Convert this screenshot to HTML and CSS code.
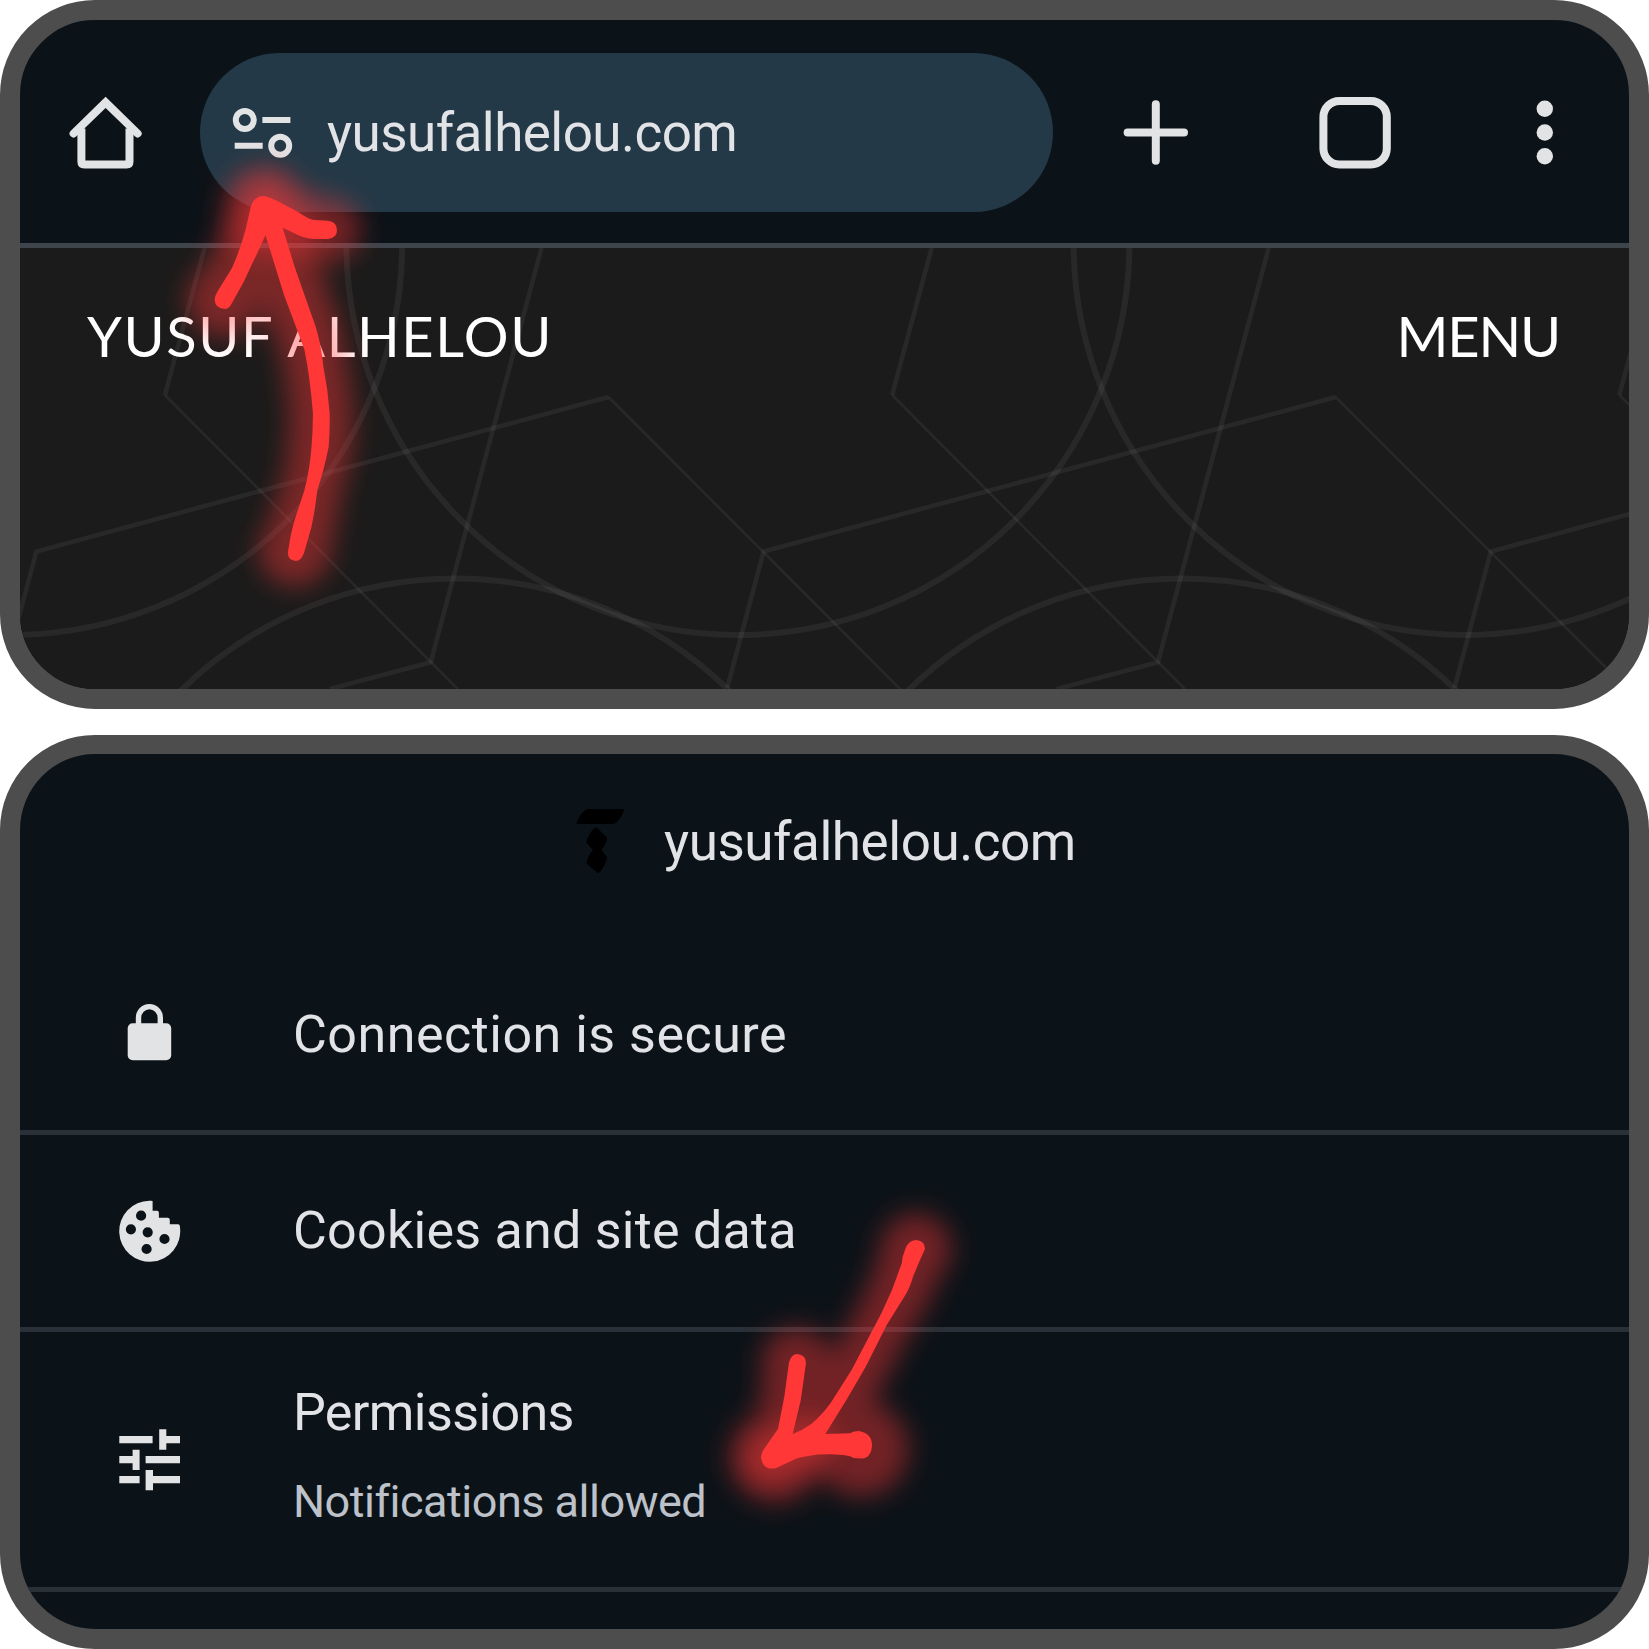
FILE: index.html
```html
<!DOCTYPE html>
<html lang="en">
<head>
<meta charset="utf-8">
<title>yusufalhelou.com</title>
<link rel="stylesheet" href="styles.css">
</head>
<body>
<main class="page">
  <section class="panel panel-browser">
    <header class="toolbar">
      <svg class="icon home" viewBox="68 94.500 76 76">
        <path d="M73.6 133 105.6 101.9 137.6 133" stroke-linecap="round"/>
        <path d="M81.4 128V161Q81.4 164 84.4 164H126.6Q129.5 164 129.5 161V128"/>
      </svg>
      <div class="omnibox">
        <svg class="icon site-info" viewBox="232 107.500 62 50">
          <circle cx="244.8" cy="119.6" r="9"/><circle cx="280.2" cy="145.3" r="9"/>
          <path d="M262.4 119.5H290.4M234.7 145.3H262.7"/>
        </svg>
        <span class="url">yusufalhelou.com</span>
      </div>
      <svg class="icon plus" viewBox="1122 99 68 68"><path d="M1127.6 132.5H1184M1155.8 104.3V160.7"/></svg>
      <svg class="icon tabs" viewBox="1319 96.500 72 72"><rect x="1323.4" y="100.5" width="63.4" height="63.4" rx="16"/></svg>
      <svg class="icon dots" viewBox="1535 99 20 68"><circle cx="1544.8" cy="108.7" r="8.2"/><circle cx="1544.8" cy="132.5" r="8.2"/><circle cx="1544.8" cy="156.2" r="8.2"/></svg>
    </header>
    <div class="site">
      <svg class="pattern" viewBox="20 248 1609 441">
        <defs>
          <g id="tile">
            <path class="mid" d="M204.5 248 164.9 395"/>
            <path class="thin" d="M164.9 395 457.7 689"/>
            <path class="mid" d="M541.5 248 430.7 662.3 329.7 689"/>
            <path class="mid" d="M0 688 36.4 551.5 608.6 397"/>
            <path class="thin" d="M608.6 397 901 690"/>
            <circle class="thick" cx="10.7" cy="243.5" r="391.5"/>
            <circle class="thick" cx="455" cy="970" r="391.5"/>
          </g>
        </defs>
        <use href="#tile"/><use href="#tile" x="727.2"/><use href="#tile" x="1454.4"/>
      </svg>
      <nav class="site-nav"><span class="brand">YUSUF ALHELOU</span><span class="menu">MENU</span></nav>
    </div>
  </section>

  <section class="panel panel-info">
    <header class="site-head">
      <svg class="favicon" viewBox="575 807 51 67">
        <path d="M576.3 824Q580 812 587.5 809H624.4Q621 820 614 824ZM596.3 827.3 607.3 837.7Q606 845 601.5 850L607.3 857.3Q605 866 600 872L597.5 873 586.3 863.3Q588 855 593 850L586.3 842.7Q588 834 594 828.5Z"/>
      </svg>
      <span class="host">yusufalhelou.com</span>
    </header>
    <div class="row row-secure">
      <svg class="row-icon" viewBox="119 1000 62 64">
        <rect x="127.7" y="1023.3" width="43.5" height="37" rx="5"/>
        <path class="shackle" d="M138.5 1026V1018A10.9 11.4 0 0 1 160.3 1018V1026"/>
      </svg>
      <span class="label secure">Connection is secure</span>
    </div>
    <div class="row row-cookies">
      <svg class="row-icon" viewBox="119 1199 62 64">
        <path fill-rule="evenodd" d="M152.6 1201V1210.7H157Q158.9 1210.7 158.9 1213V1217.7H167.5Q169.8 1217.7 169.8 1220V1224.3H178Q180 1224.3 180 1227.5A30.5 30.5 0 1 1 149.4 1200.7Q152.6 1200.5 152.6 1201ZM136 1215.7a5.1 5.1 0 1 0 10.2 0a5.1 5.1 0 1 0-10.2 0ZM125.8 1229.3a5.1 5.1 0 1 0 10.2 0a5.1 5.1 0 1 0-10.2 0ZM142.6 1232.3a5.1 5.1 0 1 0 10.2 0a5.1 5.1 0 1 0-10.2 0ZM159.4 1239a5.1 5.1 0 1 0 10.2 0a5.1 5.1 0 1 0-10.2 0ZM141.5 1249a5.1 5.1 0 1 0 10.2 0a5.1 5.1 0 1 0-10.2 0Z"/>
      </svg>
      <span class="label cookies">Cookies and site data</span>
    </div>
    <div class="row row-permissions">
      <svg class="row-icon" viewBox="119 1428 62 64">
        <path d="M119.3 1436H152.6V1443.2H119.3ZM159.2 1429.3H166.3V1436H180V1443.2H166.3V1449.7H159.2ZM119.3 1456H132.6V1449.7H139.6V1470H132.6V1463.2H119.3ZM145.6 1456H180V1463.2H145.6ZM119.3 1476H139.6V1483.2H119.3ZM145.6 1470H153V1476H180V1483.2H153V1490.3H145.6Z"/>
      </svg>
      <div class="stack">
        <span class="label perms">Permissions</span>
        <span class="sub">Notifications allowed</span>
      </div>
    </div>
  </section>

  <svg class="marks" viewBox="0 0 1649 1649">
    <defs>
      <filter id="glow" filterUnits="userSpaceOnUse" x="100" y="80" width="950" height="1520"><feGaussianBlur stdDeviation="13"/></filter>
      <path id="arrow-up" d="M264 196Q270 197 277 200.700L298 212Q308 219 314 220L328 220.700Q337 222 337 230T328 239H315.700Q306 239 298 235L282.700 227.700 294.600 266.700 304.500 295 315.700 326.700Q321 344 323.400 366.700 328 390 329.700 413.300 330 430 328.700 446.700 324 470 317.400 490 315 510 311.500 526.700L304 553Q301 561 295.700 561 287 560 288 551.700 290 535 294.600 520L304.500 490Q310 468 311.500 446.700 313 430 312.900 413 310 377 304.500 350 301 340 296.400 328L284 295 265.500 235Q259 250 252.500 263L243.800 281.700 232 303Q229 309 224.500 309 215 308 214.700 300 214 297 219 289L232 268Q240 250 245.500 230L250.800 206.700Q254 196 264 196Z"/>
      <path id="arrow-down" d="M916.500 1240Q925 1241 925 1249L920 1260 913 1276.700Q910 1288 904.300 1296.700L886.700 1325 865.700 1366.700 846.400 1400 825.300 1434 849.900 1433.300Q854 1431 858.700 1431 872 1433 872 1445.700 871 1458 862 1458.500L853.400 1458Q850 1455 830.600 1454.300 819 1454 809.600 1455.700 800 1457 795.500 1459L776.200 1468Q763 1471 761 1457.700 761 1453 764.700 1448L778 1429 784.300 1396.700 788.900 1363Q791 1354 797.300 1354 806 1355 806 1363L800.800 1400 792.700 1434Q803 1430 811.300 1424 822 1415 830.600 1403L851.600 1370 869 1336.700 881.500 1313 892 1290 901.800 1263Q902 1257 905 1250 908 1240 916.500 1240Z"/>
    </defs>
    <g class="halo" filter="url(#glow)">
      <use href="#arrow-up"/><circle cx="264" cy="205" r="16"/><circle cx="224" cy="300" r="14"/><circle cx="295" cy="550" r="13"/>
      <use href="#arrow-down"/><circle cx="775" cy="1457" r="22"/><circle cx="861" cy="1449" r="24"/><circle cx="916" cy="1249" r="12"/><circle cx="797" cy="1363" r="12"/>
    </g>
    <g class="core" filter="url(#glow)">
      <path d="M266 206 256 230M266 206 290 235"/>
      <path d="M770 1458 810 1440"/>
    </g>
    <g class="ink"><use href="#arrow-up"/><use href="#arrow-down"/></g>
  </svg>
</main>
</body>
</html>
```
FILE: styles.css
```css
* { box-sizing: border-box; }
body { margin: 0; background: #fff; font-family: Roboto, "Liberation Sans", sans-serif; color: #e2e3e7; }
svg { display: block; flex: none; }

.page { position: relative; width: 1649px; height: 1649px; display: flex; flex-direction: column; gap: 26.5px; }
.panel { border: 20px solid #4d4d4d; border-radius: 95px; overflow: hidden; background: #0c1318; display: flex; flex-direction: column; }
.panel-browser { height: 708.5px; }
.panel-info { height: 914px; border-top-width: 19px; }

.toolbar { height: 228px; flex: none; padding: 2px 0 0 48px; display: flex; align-items: center; border-bottom: 5px solid #3e444b; }
.icon { fill: none; stroke: #e2e3e5; stroke-width: 8; }
.home { width: 76px; height: 76px; }
.omnibox { margin-left: 56px; width: 852.5px; height: 159px; border-radius: 80px; background: #233947; display: flex; align-items: center; padding-left: 32px; }
.site-info { width: 62px; height: 50px; stroke-width: 6; }
.url { margin-left: 33px; font-size: 53px; line-height: 64px; letter-spacing: -0.55px; white-space: nowrap; }
.plus { width: 68px; height: 68px; margin-left: 69px; stroke-linecap: round; }
.tabs { width: 72px; height: 72px; margin-left: 129px; }
.dots { width: 20px; height: 68px; margin-left: 144px; fill: #e2e3e5; stroke: none; }

.site { flex: 1; display: grid; background: #1b1b1b; }
.pattern { grid-area: 1 / 1; width: 1609px; height: 441px; fill: none; stroke: rgba(255, 255, 255, 0.06); }
.thin { stroke-width: 2.6; }
.mid { stroke-width: 4.6; }
.thick { stroke-width: 6; }
.site-nav { grid-area: 1 / 1; align-self: start; display: flex; justify-content: space-between; padding: 54px 69px 0 67px; font: 400 56px/68px Lato, "Liberation Sans", sans-serif; color: #fff; }
.brand { letter-spacing: 1.6px; }
.menu { letter-spacing: -1.2px; }

.site-head { height: 176px; flex: none; display: flex; align-items: center; padding-left: 555px; }
.favicon { width: 51px; height: 67px; margin-top: -4px; fill: #000; }
.host { margin-left: 38px; font-size: 53px; line-height: 64px; letter-spacing: -0.45px; white-space: nowrap; }
.row { display: flex; align-items: center; flex: none; padding-left: 99px; border-bottom: 5px solid #293037; }
.row-secure { height: 205px; padding-top: 4px; }
.row-cookies { height: 197px; }
.row-permissions { height: 260px; }
.row-icon { width: 62px; height: 64px; fill: #e2e3e5; }
.shackle { fill: none; stroke: #e2e3e5; stroke-width: 5.4; }
.label { margin-left: 112px; font-size: 52px; line-height: 64px; white-space: nowrap; }
.secure { padding-top: 5px; letter-spacing: 0.5px; }
.cookies { letter-spacing: 0.25px; }
.perms { letter-spacing: -0.6px; }
.stack { display: flex; flex-direction: column; margin-left: 112px; padding-bottom: 7px; gap: 27px; }
.stack .label { margin-left: 0; }
.sub { font-size: 45px; line-height: 60px; letter-spacing: -0.5px; color: #bcc1ca; white-space: nowrap; }

.marks { position: absolute; left: 0; top: 0; width: 1649px; height: 1649px; pointer-events: none; }
.ink { fill: #ff3737; }
.halo { fill: #ff3737; stroke: #ff3737; stroke-width: 47; stroke-linejoin: round; opacity: 0.42; }
.core { fill: none; stroke: #ff3737; stroke-width: 48; stroke-linecap: round; opacity: 0.4; }
```
